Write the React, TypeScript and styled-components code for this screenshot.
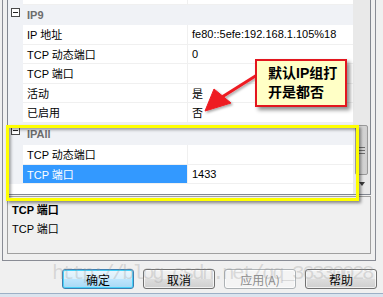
import React from 'react';
import styled, { createGlobalStyle } from 'styled-components';

const Global = createGlobalStyle`
  html, body { margin: 0; padding: 0; background: #f0f0f0; }
  body {
    font-family: "Liberation Sans", "Noto Sans CJK SC", sans-serif;
    font-size: 11px;
    color: #000;
  }
  #root { width: 383px; height: 297px; }
`;

const Page = styled.div`
  position: relative;
  width: 383px;
  height: 297px;
  overflow: hidden;
  background: #f0f0f0;
  display: flex;
  flex-direction: column;
`;

const Frame = styled.div`
  margin-left: 2px;
  width: 374px;
  box-sizing: border-box;
  border: 1px solid #898c95;
  border-top: none;
  padding: 0 4px 6px 4px;
  display: flex;
  flex-direction: column;
  gap: 1px;
`;

const GridBox = styled.div`
  height: 195px;
  box-sizing: border-box;
  border: 1px solid #828790;
  border-top: none;
  display: flex;
  background: #fff;
`;

const Grid = styled.div`
  flex: 1;
  display: flex;
  flex-direction: column;
  overflow: hidden;
  background: #fff;
`;

const Row = styled.div<{ $h: number }>`
  display: flex;
  flex: none;
  height: ${p => p.$h}px;
`;

const Gutter = styled.div`
  width: 15px;
  flex: none;
  background: #f0f2f6;
  display: flex;
  align-items: flex-start;
`;

const ExpandBox = styled.div`
  width: 9px;
  height: 9px;
  box-sizing: border-box;
  margin: 3px 0 0 3px;
  border: 1px solid #4a4a4a;
  background: #fff;
  display: flex;
  align-items: center;
  justify-content: center;
  &::after {
    content: '';
    width: 5px;
    height: 1px;
    background: #222;
  }
`;

const LabelCell = styled.div<{ $selected?: boolean }>`
  width: 165px;
  flex: none;
  box-sizing: border-box;
  padding-left: 4px;
  display: flex;
  align-items: center;
  white-space: nowrap;
  background: ${p => (p.$selected ? '#3399ff' : '#fff')};
  color: ${p => (p.$selected ? '#fff' : '#000')};
  border-bottom: 1px solid #f0f0f0;
  border-right: 1px solid #f0f0f0;
`;

const ValueCell = styled.div`
  flex: 1;
  box-sizing: border-box;
  padding-left: 4px;
  display: flex;
  align-items: center;
  white-space: nowrap;
  border-bottom: 1px solid #f0f0f0;
`;

const CategoryCell = styled.div`
  flex: 1;
  box-sizing: border-box;
  padding-left: 4px;
  display: flex;
  align-items: center;
  background: #f0f2f6;
  color: #6d6d6d;
  font-weight: 700;
`;

const Scrollbar = styled.div`
  width: 17px;
  flex: none;
  display: flex;
  flex-direction: column;
  background: #e9e9e9;
`;

const Track = styled.div`
  flex: 1;
  padding-top: 125px;
  box-sizing: border-box;
`;

const Thumb = styled.div`
  margin-left: 2px;
  width: 13px;
  height: 50px;
  box-sizing: border-box;
  border: 1px solid #9a9a9a;
  border-radius: 2px;
  background: linear-gradient(to right, #e2e2e2, #cfcfcf);
  display: flex;
  flex-direction: column;
  align-items: center;
  justify-content: center;
  gap: 2px;
`;

const Grip = styled.div`
  width: 6px;
  height: 1px;
  background: #6f6f6f;
`;

const ArrowButton = styled.div`
  height: 17px;
  display: flex;
  align-items: center;
  justify-content: center;
  &::after {
    content: '';
    border-left: 3.5px solid transparent;
    border-right: 3.5px solid transparent;
    border-top: 4px solid #3c3c3c;
    margin-top: -4px;
  }
`;

const DescBox = styled.div`
  height: 58px;
  box-sizing: border-box;
  border: 1px solid #a0a0a0;
  padding: 6px 4px 0 4px;
  display: flex;
  flex-direction: column;
  gap: 5px;
  line-height: 14px;
`;

const DescTitle = styled.div`
  font-weight: 700;
`;

const DescText = styled.div``;

const ButtonBar = styled.div`
  display: flex;
  gap: 9px;
  padding-left: 62px;
  margin-top: 8px;
`;

const Button = styled.div<{ $default?: boolean; $disabled?: boolean }>`
  width: 72px;
  height: 20px;
  box-sizing: border-box;
  border-radius: 3px;
  border: 1px solid ${p => (p.$default ? '#3c7fb1' : p.$disabled ? '#adb2b5' : '#707070')};
  background: ${p =>
    p.$disabled
      ? '#f4f4f4'
      : p.$default
      ? 'linear-gradient(#eaf6fd 0%, #d9f0fc 50%, #bee6fd 51%, #a7d9f5 100%)'
      : 'linear-gradient(#f2f2f2 0%, #ebebeb 50%, #dddddd 51%, #cfcfcf 100%)'};
  box-shadow: ${p => (p.$default ? 'inset 0 0 0 1px #48d1f8' : 'inset 0 0 0 1px rgba(255,255,255,0.7)')};
  color: ${p => (p.$disabled ? '#8d8d8d' : '#000')};
  font-family: "Noto Sans CJK SC", sans-serif;
  font-size: 12px;
  display: flex;
  align-items: center;
  justify-content: center;
`;

const Footer = styled.div`
  margin-top: auto;
  height: 3px;
  border-top: 1px solid #9db0c6;
  background: #dbe4ee;
`;

const Highlight = styled.div`
  position: absolute;
  left: 6px;
  top: 125px;
  width: 353px;
  height: 76px;
  box-sizing: border-box;
  border: 3px solid #ffff00;
  box-shadow: 2px 2px 3px rgba(0, 0, 0, 0.45), inset 2px 2px 3px rgba(0, 0, 0, 0.35);
  pointer-events: none;
`;

const Callout = styled.div`
  position: absolute;
  left: 255px;
  top: 59px;
  width: 92px;
  height: 48px;
  box-sizing: border-box;
  border: 2px solid #e3161e;
  background: #ffffc6;
  box-shadow: 3px 3px 4px rgba(0, 0, 0, 0.45);
  padding: 3px 0 0 11px;
  font-family: "Liberation Sans", "Noto Sans CJK SC", sans-serif;
  font-weight: 700;
  font-size: 14px;
  line-height: 19px;
  color: #000;
`;

const ArrowLayer = styled.svg`
  position: absolute;
  left: 0;
  top: 0;
  pointer-events: none;
`;

const Watermark = styled.div`
  position: absolute;
  left: 52px;
  top: 262px;
  font-family: "Liberation Mono", monospace;
  font-size: 21px;
  letter-spacing: -2.6px;
  color: rgba(150, 150, 150, 0.3);
  white-space: nowrap;
  pointer-events: none;
`;

type Prop = { label: string; value: string; selected?: boolean };
type Section = { kind: 'partial' } | { kind: 'cat'; name: string; h: number } | ({ kind: 'prop'; h: number } & Prop);

const rows: Section[] = [
  { kind: 'partial' },
  { kind: 'cat', name: 'IP9', h: 20 },
  { kind: 'prop', h: 19.5, label: 'IP 地址', value: 'fe80::5efe:192.168.1.105%18' },
  { kind: 'prop', h: 19.5, label: 'TCP 动态端口', value: '0' },
  { kind: 'prop', h: 19.5, label: 'TCP 端口', value: '' },
  { kind: 'prop', h: 19.5, label: '活动', value: '是' },
  { kind: 'prop', h: 19.5, label: '已启用', value: '否' },
  { kind: 'cat', name: 'IPAll', h: 22 },
  { kind: 'prop', h: 20, label: 'TCP 动态端口', value: '' },
  { kind: 'prop', h: 19.5, label: 'TCP 端口', value: '1433', selected: true },
];

export default function App() {
  return (
    <>
      <Global />
      <Page>
        <Frame>
          <GridBox>
            <Grid>
              {rows.map((r, i) => {
                if (r.kind === 'partial') {
                  return (
                    <Row key={i} $h={5}>
                      <Gutter />
                      <LabelCell />
                      <ValueCell />
                    </Row>
                  );
                }
                if (r.kind === 'cat') {
                  return (
                    <Row key={i} $h={r.h}>
                      <Gutter>
                        <ExpandBox />
                      </Gutter>
                      <CategoryCell>{r.name}</CategoryCell>
                    </Row>
                  );
                }
                return (
                  <Row key={i} $h={r.h}>
                    <Gutter />
                    <LabelCell $selected={r.selected}>{r.label}</LabelCell>
                    <ValueCell>{r.value}</ValueCell>
                  </Row>
                );
              })}
            </Grid>
            <Scrollbar>
              <Track>
                <Thumb>
                  <Grip />
                  <Grip />
                  <Grip />
                </Thumb>
              </Track>
              <ArrowButton />
            </Scrollbar>
          </GridBox>
          <DescBox>
            <DescTitle>TCP 端口</DescTitle>
            <DescText>TCP 端口</DescText>
          </DescBox>
        </Frame>
        <ButtonBar>
          <Button $default>确定</Button>
          <Button>取消</Button>
          <Button $disabled>应用(A)</Button>
          <Button>帮助</Button>
        </ButtonBar>
        <Footer />

        <Highlight />
        <ArrowLayer width={383} height={297} viewBox="0 0 383 297">
          <defs>
            <filter id="sh" x="-20%" y="-20%" width="140%" height="140%">
              <feDropShadow dx="1.5" dy="1.5" stdDeviation="1" floodColor="#000" floodOpacity="0.35" />
            </filter>
          </defs>
          <g filter="url(#sh)" fill="#ee1c24" stroke="#ee1c24">
            <line x1={257} y1={75} x2={222} y2={97} strokeWidth={3} strokeLinecap="round" />
            <polygon points="205,111 214,89 231,103" strokeWidth={1} strokeLinejoin="round" />
          </g>
        </ArrowLayer>
        <Callout>
          默认IP组打
          <br />
          开是都否
        </Callout>
        <Watermark>http://blog.csdn.net/qq_36330028</Watermark>
      </Page>
    </>
  );
}
